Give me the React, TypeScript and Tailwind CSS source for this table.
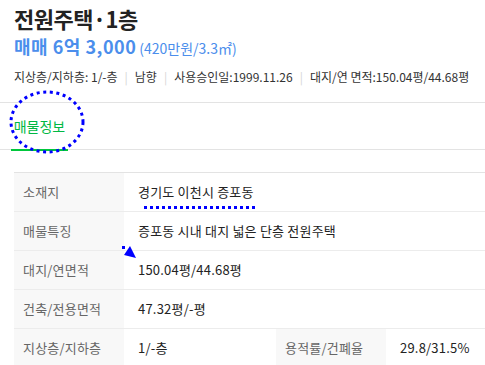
import React from "react";

const rows = [
  { label: "소재지", value: "경기도 이천시 증포동" },
  { label: "매물특징", value: "증포동 시내 대지 넓은 단층 전원주택" },
  { label: "대지/연면적", value: "150.04평/44.68평" },
  { label: "건축/전용면적", value: "47.32평/-평" },
];

const Sep = () => <span className="mx-[7px] text-[#d5d5d5]">|</span>;

export default function App() {
  return (
    <div
      className="relative w-[485px] h-[365px] overflow-hidden bg-white text-[#222]"
      style={{ fontFamily: '"Noto Sans CJK KR", "Noto Sans", sans-serif' }}
    >
      <div className="px-[14px] pt-[2px]">
        <h1 className="text-[22px] font-bold leading-[32px] tracking-[-0.5px]">
          전원주택·1층
        </h1>
        <div className="flex items-baseline text-[#4b8eec] leading-[24px]">
          <span className="text-[18px] font-bold tracking-[0.5px]">매매 6억 3,000</span>
          <span className="ml-[3px] text-[14px]">(420만원/3.3㎡)</span>
        </div>
        <div className="mt-[9px] text-[12px] leading-[16px] text-[#333] whitespace-nowrap">
          지상층/지하층: 1/-층<Sep />남향<Sep />사용승인일:1999.11.26<Sep />대지/연 면적:150.04평/44.68평
        </div>
      </div>

      <div className="mt-[17px] border-t border-b border-[#e3e3e3] h-[48px] flex">
        <div className="ml-[11px] w-[57px] border-b-2 border-[#00c73c] -mb-[2px] flex items-center justify-center text-[14px] text-[#00b843]">
          매물정보
        </div>
      </div>

      <div className="ml-[14px] mt-[22px] border-t border-[#e3e3e3] text-[13px] tracking-[0.2px]">
        {rows.map((r) => (
          <div key={r.label} className="flex h-[39px] border-b border-[#ececec]">
            <div className="w-[110px] bg-[#f8f8f8] pl-[9px] flex items-center text-[#666]">
              {r.label}
            </div>
            <div className="pl-[14px] flex items-center">{r.value}</div>
          </div>
        ))}
        <div className="flex h-[39px] border-b border-[#ececec]">
          <div className="w-[110px] bg-[#f8f8f8] pl-[9px] flex items-center text-[#666]">
            지상층/지하층
          </div>
          <div className="w-[152px] pl-[14px] flex items-center">1/-층</div>
          <div className="w-[110px] bg-[#f8f8f8] pl-[9px] flex items-center text-[#666]">
            용적률/건폐율
          </div>
          <div className="pl-[14px] flex items-center">29.8/31.5%</div>
        </div>
      </div>

      <svg className="absolute left-0 top-0 pointer-events-none" width="485" height="365">
        <ellipse
          cx="47"
          cy="122"
          rx="36"
          ry="30"
          fill="none"
          stroke="#0000ff"
          strokeWidth="3"
          strokeDasharray="3 3.6"
        />
        <line x1="144" y1="207.5" x2="257" y2="207.5" stroke="#0000ff" strokeWidth="3" strokeDasharray="3 3" />
        <rect x="122" y="246" width="3" height="3" fill="#0000ff" />
        <polygon points="130,246 124,255 136,258" fill="#0000ff" />
      </svg>
    </div>
  );
}
